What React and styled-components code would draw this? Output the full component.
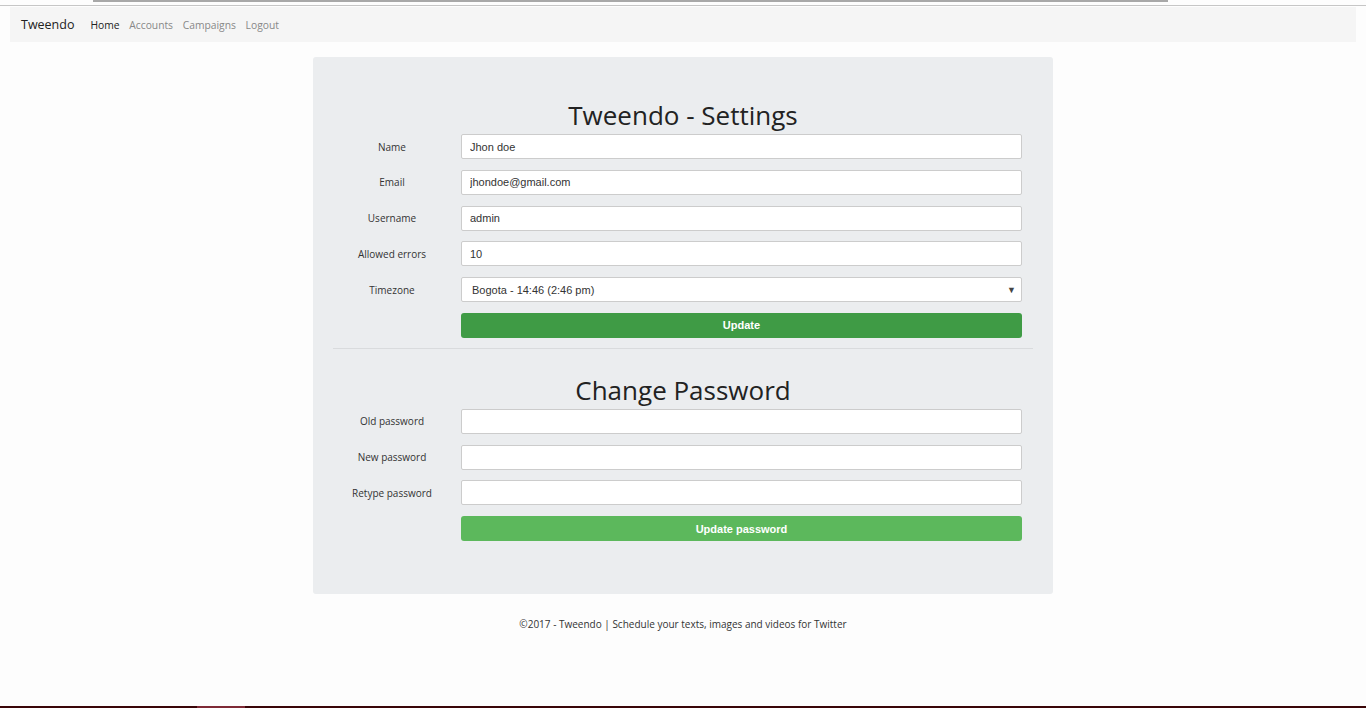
import React from 'react'
import styled, { createGlobalStyle } from 'styled-components'

const GlobalStyle = createGlobalStyle`
  html, body {
    margin: 0;
    padding: 0;
    background: #fdfdfd;
  }
  body {
    font-family: "Open Sans", "Noto Sans", sans-serif;
    color: #333;
  }
`

const Page = styled.div`
  min-height: 708px;
  display: flex;
  flex-direction: column;
`

const TopStrip = styled.div`
  height: 7px;
  position: relative;
  &::before {
    content: '';
    position: absolute;
    left: 93px;
    width: 1075px;
    top: 0;
    height: 2px;
    background: #a8a8a8;
  }
  &::after {
    content: '';
    position: absolute;
    left: 0;
    right: 0;
    top: 5px;
    height: 1px;
    background: #c6c6c6;
  }
`

const Navbar = styled.nav`
  margin: 0 10px;
  height: 35px;
  background: #f5f5f5;
  display: flex;
  align-items: center;
  padding-left: 11px;
`

const Brand = styled.span`
  font-size: 12.5px;
  color: #222;
  margin-right: 16px;
`

const NavLink = styled.a`
  font-size: 10.3px;
  color: ${p => (p.active ? '#222' : '#888')};
  margin-right: 9.7px;
  text-decoration: none;
`

const Main = styled.main`
  display: flex;
  justify-content: center;
  padding-top: 15px;
`

const Card = styled.div`
  width: 740px;
  box-sizing: border-box;
  background: #ebedef;
  border-radius: 3px;
  padding: 0 20px 53px;
`

const Title = styled.h2`
  margin: 0;
  text-align: center;
  font-weight: 500;
  font-size: 26px;
  color: #222;
  height: ${p => p.h}px;
  line-height: 1;
  display: flex;
  align-items: flex-end;
  justify-content: center;
  padding-bottom: 6px;
  box-sizing: border-box;
`

const Form = styled.div`
  display: grid;
  grid-template-columns: 118px 561px;
  column-gap: 10px;
  row-gap: ${p => p.gap}px;
  align-items: center;
`

const Label = styled.label`
  text-align: center;
  font-size: 10px;
  color: #333;
`

const Input = styled.input`
  height: 25px;
  box-sizing: border-box;
  border: 1px solid #ccc;
  border-radius: 2px;
  background: #fff;
  padding: 0 8px;
  font-family: "Liberation Sans", Arial, sans-serif;
  font-size: 11px;
  color: #333;
  outline: none;
`

const SelectBox = styled.div`
  height: 25px;
  box-sizing: border-box;
  border: 1px solid #ccc;
  border-radius: 2px;
  background: #fff;
  padding: 0 5px 0 10px;
  display: flex;
  align-items: center;
  justify-content: space-between;
  font-family: "Liberation Sans", Arial, sans-serif;
  font-size: 11px;
  color: #333;
`

const Caret = styled.span`
  font-size: 9px;
  color: #444;
`

const Button = styled.button`
  grid-column: 2;
  height: 25px;
  border: none;
  border-radius: 3px;
  background: ${p => p.bg};
  color: #fff;
  font-family: "Liberation Sans", Arial, sans-serif;
  font-size: 11px;
  font-weight: 700;
`

const Divider = styled.hr`
  border: none;
  border-top: 1px solid #d9dbdd;
  margin: 10px 0 0;
`

const Footer = styled.footer`
  text-align: center;
  font-size: 10px;
  color: #333;
  margin-top: 23px;
`

const Spacer = styled.div`
  flex: 1;
`

const BottomBar = styled.div`
  height: 2px;
  background: #3a0508;
  position: relative;
  &::after {
    content: '';
    position: absolute;
    left: 197px;
    width: 48px;
    top: 0;
    bottom: 0;
    background: #7e2a36;
  }
`

const settings = [
  ['Name', 'Jhon doe'],
  ['Email', 'jhondoe@gmail.com'],
  ['Username', 'admin'],
  ['Allowed errors', '10'],
]

const passwords = ['Old password', 'New password', 'Retype password']

export default function App() {
  return (
    <Page>
      <GlobalStyle />
      <TopStrip />
      <Navbar>
        <Brand>Tweendo</Brand>
        <NavLink active>Home</NavLink>
        <NavLink>Accounts</NavLink>
        <NavLink>Campaigns</NavLink>
        <NavLink>Logout</NavLink>
      </Navbar>
      <Main>
        <Card>
          <Title h={77}>Tweendo - Settings</Title>
          <Form gap={10.75}>
            {settings.map(([label, value]) => (
              <React.Fragment key={label}>
                <Label>{label}</Label>
                <Input defaultValue={value} />
              </React.Fragment>
            ))}
            <Label>Timezone</Label>
            <SelectBox>
              <span>Bogota - 14:46 (2:46 pm)</span>
              <Caret>▼</Caret>
            </SelectBox>
            <Button bg="#3f9b45">Update</Button>
          </Form>
          <Divider />
          <Title h={60}>Change Password</Title>
          <Form gap={10.75}>
            {passwords.map(label => (
              <React.Fragment key={label}>
                <Label>{label}</Label>
                <Input type="password" />
              </React.Fragment>
            ))}
            <Button bg="#5cb85c">Update password</Button>
          </Form>
        </Card>
      </Main>
      <Footer>©2017 - Tweendo | Schedule your texts, images and videos for Twitter</Footer>
      <Spacer />
      <BottomBar />
    </Page>
  )
}
